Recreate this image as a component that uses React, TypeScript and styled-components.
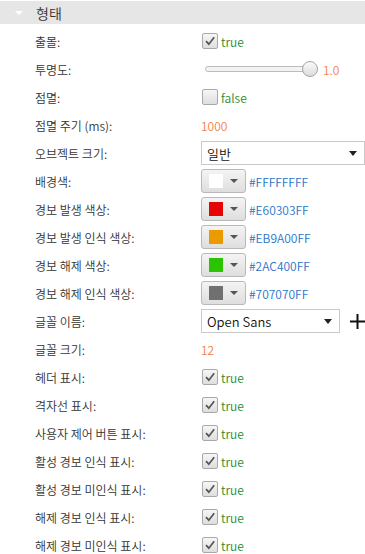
import styled, { createGlobalStyle } from "styled-components";

const GlobalStyle = createGlobalStyle`
  body {
    margin: 0;
    background: #ffffff;
    font-family: "Segoe UI", "Noto Sans CJK KR", "Open Sans", sans-serif;
    font-size: 12px;
    font-weight: 350;
    color: #333333;
  }
`;

const Panel = styled.div`
  width: 365px;
  height: 554px;
  padding-top: 1px;
  box-sizing: border-box;
  overflow: hidden;
`;

const SectionHeader = styled.div`
  height: 23px;
  background: #e6e6e6;
  display: flex;
  align-items: center;
  font-size: 14px;
  color: #333333;
`;

const Caret = styled.span`
  width: 0;
  height: 0;
  margin-left: 15px;
  margin-right: 13px;
  border-left: 4px solid transparent;
  border-right: 4px solid transparent;
  border-top: 4px solid #ffffff;
`;

const Rows = styled.div`
  padding-top: 3px;
  display: flex;
  flex-direction: column;
`;

const Row = styled.div`
  height: 28px;
  display: grid;
  grid-template-columns: 201px 1fr;
  align-items: center;
`;

const Label = styled.span`
  padding-left: 35px;
  color: #333333;
`;

const Value = styled.div`
  display: flex;
  align-items: center;
  gap: 3px;
`;

const Box = styled.span<{ $checked: boolean }>`
  width: 14px;
  height: 14px;
  margin-left: 1px;
  border: 1px solid #a9a9a9;
  border-radius: 2px;
  background: linear-gradient(#f6f6f6, #dedede);
  display: flex;
  align-items: center;
  justify-content: center;
`;

const BoolText = styled.span`
  color: #2a8a2a;
`;

const NumText = styled.span`
  color: #f0824a;
`;

const HexText = styled.span`
  color: #2a74c8;
`;

const Track = styled.div`
  position: relative;
  width: 104px;
  height: 4px;
  margin-left: 4px;
  border: 1px solid #bdbdbd;
  border-radius: 3px;
  background: #f3f3f3;
`;

const Thumb = styled.span`
  position: absolute;
  right: -8px;
  top: -6px;
  width: 14px;
  height: 14px;
  border-radius: 50%;
  border: 1px solid #a4a4a4;
  background: linear-gradient(#fafafa, #dcdcdc);
`;

const SliderValue = styled(NumText)`
  margin-left: 9px;
`;

const Select = styled.div<{ $width: number }>`
  width: ${({ $width }) => $width}px;
  height: 24px;
  box-sizing: border-box;
  border: 1px solid #c9c9c9;
  background: #ffffff;
  display: flex;
  align-items: center;
  justify-content: space-between;
  padding: 0 7px 0 5px;
  color: #111111;
  font-size: 13px;
`;

const Arrow = styled.span`
  width: 0;
  height: 0;
  border-left: 4px solid transparent;
  border-right: 4px solid transparent;
  border-top: 5px solid #222222;
`;

const ColorButton = styled.div`
  width: 45px;
  height: 24px;
  box-sizing: border-box;
  border: 1px solid #b9b9b9;
  border-radius: 3px;
  background: linear-gradient(#f4f4f4, #dedede);
  display: flex;
  align-items: center;
  padding-left: 7px;
  gap: 7px;
`;

const Swatch = styled.span<{ $color: string }>`
  width: 14px;
  height: 14px;
  background: ${({ $color }) => $color};
`;

const SmallArrow = styled(Arrow)`
  border-top: 4px solid #555555;
`;

const Plus = styled.span`
  margin-left: 6px;
  display: flex;
`;

const Check = ({ checked }: { checked: boolean }) => (
  <Value>
    <Box $checked={checked}>
      {checked && (
        <svg width="12" height="12" viewBox="0 0 12 12">
          <path d="M2 6.2 L4.8 9.2 L10.2 2.2" fill="none" stroke="#555" strokeWidth="1.7" />
        </svg>
      )}
    </Box>
    <BoolText>{checked ? "true" : "false"}</BoolText>
  </Value>
);

const ColorValue = ({ color, hex }: { color: string; hex: string }) => (
  <Value>
    <ColorButton>
      <Swatch $color={color} />
      <SmallArrow />
    </ColorButton>
    <HexText>{hex}</HexText>
  </Value>
);

const colors = [
  { label: "배경색:", color: "#FFFFFF", hex: "#FFFFFFFF" },
  { label: "경보 발생 색상:", color: "#E60303", hex: "#E60303FF" },
  { label: "경보 발생 인식 색상:", color: "#EB9A00", hex: "#EB9A00FF" },
  { label: "경보 해제 색상:", color: "#2AC400", hex: "#2AC400FF" },
  { label: "경보 해제 인식 색상:", color: "#707070", hex: "#707070FF" },
];

const toggles = [
  "헤더 표시:",
  "격자선 표시:",
  "사용자 제어 버튼 표시:",
  "활성 경보 인식 표시:",
  "활성 경보 미인식 표시:",
  "해제 경보 인식 표시:",
  "해제 경보 미인식 표시:",
];

export default function App() {
  return (
    <>
      <GlobalStyle />
      <Panel>
        <SectionHeader>
          <Caret />
          형태
        </SectionHeader>
        <Rows>
          <Row>
            <Label>출몰:</Label>
            <Check checked />
          </Row>
          <Row>
            <Label>투명도:</Label>
            <Value>
              <Track>
                <Thumb />
              </Track>
              <SliderValue>1.0</SliderValue>
            </Value>
          </Row>
          <Row>
            <Label>점멸:</Label>
            <Check checked={false} />
          </Row>
          <Row>
            <Label>점멸 주기 (ms):</Label>
            <Value>
              <NumText>1000</NumText>
            </Value>
          </Row>
          <Row>
            <Label>오브젝트 크기:</Label>
            <Value>
              <Select $width={164}>
                일반
                <Arrow />
              </Select>
            </Value>
          </Row>
          {colors.map((c) => (
            <Row key={c.label}>
              <Label>{c.label}</Label>
              <ColorValue color={c.color} hex={c.hex} />
            </Row>
          ))}
          <Row>
            <Label>글꼴 이름:</Label>
            <Value>
              <Select $width={139}>
                Open Sans
                <Arrow />
              </Select>
              <Plus>
                <svg width="17" height="17" viewBox="0 0 17 17">
                  <path d="M8.5 1 V16 M1 8.5 H16" stroke="#111" strokeWidth="2" />
                </svg>
              </Plus>
            </Value>
          </Row>
          <Row>
            <Label>글꼴 크기:</Label>
            <Value>
              <NumText>12</NumText>
            </Value>
          </Row>
          {toggles.map((t) => (
            <Row key={t}>
              <Label>{t}</Label>
              <Check checked />
            </Row>
          ))}
        </Rows>
      </Panel>
    </>
  );
}
